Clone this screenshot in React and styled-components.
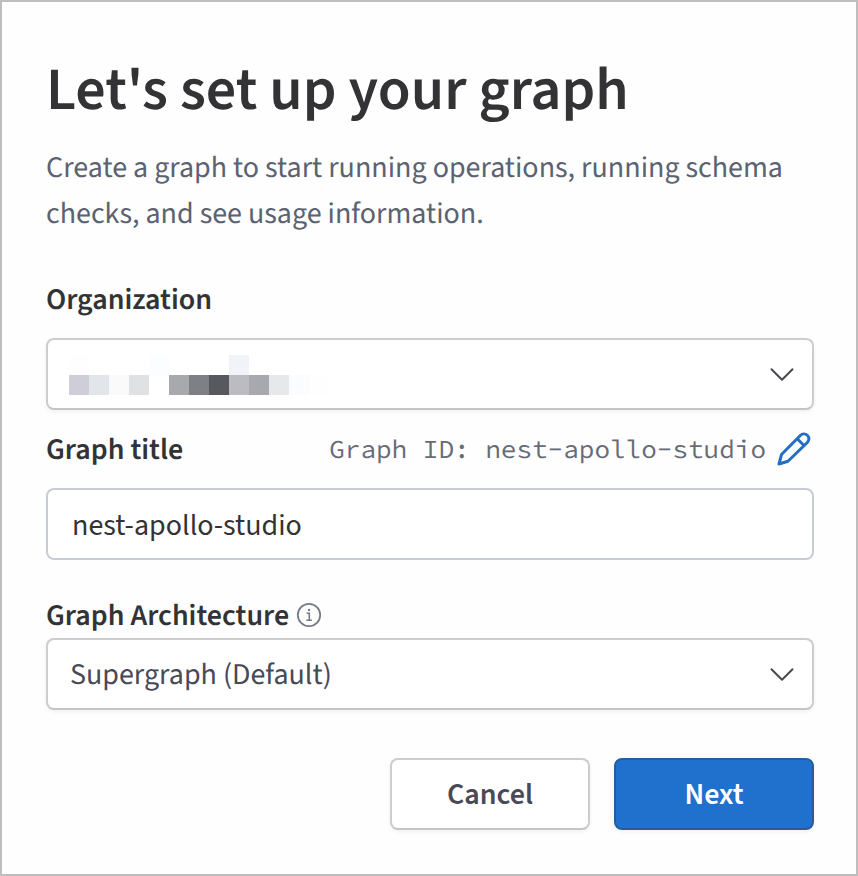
import React from "react";
import styled, { createGlobalStyle } from "styled-components";

const sans = '"Source Sans 3", "Source Sans Pro", "Noto Sans CJK SC", sans-serif';
const mono = '"Source Code Pro", "Noto Sans Mono", "Liberation Mono", monospace';

const GlobalStyle = createGlobalStyle`
  *, *::before, *::after { box-sizing: border-box; }
  body { margin: 0; background: #fff; font-family: ${sans}; text-rendering: geometricPrecision; }
  button, input { font: inherit; }
`;

const Dialog = styled.main`
  width: 858px;
  height: 876px;
  padding: 59px 42px 0 44px;
  border: 2px solid #bebebe;
  background: #fefefe;
`;

const Title = styled.h1`
  margin: 0;
  font-size: 60px;
  line-height: 60px;
  font-weight: 600;
  color: #333335;
`;

const Description = styled.p`
  margin: 24px 0 0;
  font-size: 30px;
  line-height: 46px;
  color: #5b6270;
`;

const Row = styled.div`
  display: flex;
  align-items: center;
  height: 40px;
  margin-top: ${(p) => p.$gap}px;
`;

const Label = styled.label`
  font-size: 30px;
  line-height: 40px;
  font-weight: 600;
  color: #333335;
`;

const GraphId = styled.span`
  margin-left: auto;
  font-family: ${mono};
  font-size: 26px;
  line-height: 40px;
  color: #666b77;
`;

const IconButton = styled.button`
  display: flex;
  margin: 0 3px 0 11px;
  padding: 0 0 2px;
  border: 0;
  background: none;
`;

const InfoIcon = styled.svg`
  margin: 0 0 2px 7px;
`;

const ChevronIcon = styled.svg`
  margin-bottom: 2px;
`;

const Select = styled.div`
  display: flex;
  align-items: center;
  justify-content: space-between;
  height: 72px;
  margin-top: ${(p) => p.$gap}px;
  padding: 2px 17px 0 22px;
  border: 2px solid #cdcdcd;
  border-bottom-color: #c4c4c4;
  border-radius: 8px;
  background: #fff;
  box-shadow: 0 2px 4px rgba(0, 0, 0, 0.05);
  font-size: 30px;
  line-height: 40px;
  color: #484a57;
`;

const TextInput = styled.input`
  display: block;
  width: 100%;
  height: 72px;
  margin-top: 18px;
  padding: 2px 24px 0;
  border: 2px solid #c9ccd4;
  border-radius: 8px;
  background: #fff;
  font-size: 30px;
  color: #333335;
  outline: none;
`;

const Redacted = styled.div`
  display: grid;
  grid-template-columns: repeat(13, 20px);
  grid-auto-rows: 20px;
  margin-left: -1px;
`;

const Pixel = styled.span`
  background: ${(p) => p.$c};
`;

const Actions = styled.div`
  display: flex;
  justify-content: flex-end;
  gap: 24px;
  margin-top: 48px;
`;

const Button = styled.button`
  width: 200px;
  height: 72px;
  padding: 0;
  border: 2px solid ${(p) => (p.$primary ? "#265d9f" : "#cdcdcd")};
  border-bottom-color: ${(p) => (p.$primary ? "#265d9f" : "#c4c4c4")};
  border-radius: 8px;
  background: ${(p) => (p.$primary ? "#2070cd" : "#fff")};
  box-shadow: 0 2px 4px rgba(0, 0, 0, 0.05);
  font-size: 30px;
  font-weight: 600;
  color: ${(p) => (p.$primary ? "#fff" : "#484a57")};
`;

const n = "transparent";
const pixels = [
  "#fefeff", n, n, n, "#fcfdff", n, n, n, "#f2f2f9", n, n, n, n,
  "#cecdd8", "#e2e5e9", "#fafafa", "#e0e1e3", n, "#a8a9ad", "#7f8085", "#58595f",
  "#bdbbc2", "#a8a9ae", "#e7e8ea", "#fafcff", "#fefeff",
];

const Chevron = () => (
  <ChevronIcon width="26" height="16" viewBox="0 0 26 16" fill="none" stroke="#484a50" strokeWidth="2" strokeLinecap="round" strokeLinejoin="round">
    <path d="M2.500 3.200 13 13.700 23.500 3.200" />
  </ChevronIcon>
);

const Pencil = () => (
  <svg width="34" height="34" viewBox="0 0 34 34" fill="none" stroke="#236fc4" strokeWidth="3" strokeLinejoin="round">
    <path d="M2 32 4.500 22.500 23.300 3.500C25.300 1.500 28.500 1.500 30.500 3.500S32.300 8.500 30.300 10.500L11 29.300Z" />
    <path d="M20.300 6.800 27 13.500" />
  </svg>
);

const Info = () => (
  <InfoIcon width="26" height="26" viewBox="0 0 26 26" fill="none" stroke="#777b88" strokeWidth="1.8">
    <circle cx="13" cy="13" r="11.200" />
    <path d="M10.600 11.300h2.700v6.700M10.300 18.300h5.600" strokeWidth="1.6" />
    <circle cx="13" cy="8" r="1.200" fill="#777b88" stroke="none" />
  </InfoIcon>
);

export default function App() {
  return (
    <>
      <GlobalStyle />
      <Dialog>
        <Title>Let's set up your graph</Title>
        <Description>
          Create a graph to start running operations, running schema checks, and see usage information.
        </Description>
        <Row $gap={43}>
          <Label>Organization</Label>
        </Row>
        <Select $gap={18}>
          <Redacted>{pixels.map((c, i) => <Pixel key={i} $c={c} />)}</Redacted>
          <Chevron />
        </Select>
        <Row $gap={20}>
          <Label htmlFor="title">Graph title</Label>
          <GraphId>Graph ID: nest-apollo-studio</GraphId>
          <IconButton aria-label="Edit graph ID"><Pencil /></IconButton>
        </Row>
        <TextInput id="title" defaultValue="nest-apollo-studio" />
        <Row $gap={36}>
          <Label>Graph Architecture</Label>
          <Info />
        </Row>
        <Select $gap={2}>
          Supergraph (Default)
          <Chevron />
        </Select>
        <Actions>
          <Button>Cancel</Button>
          <Button $primary>Next</Button>
        </Actions>
      </Dialog>
    </>
  );
}
